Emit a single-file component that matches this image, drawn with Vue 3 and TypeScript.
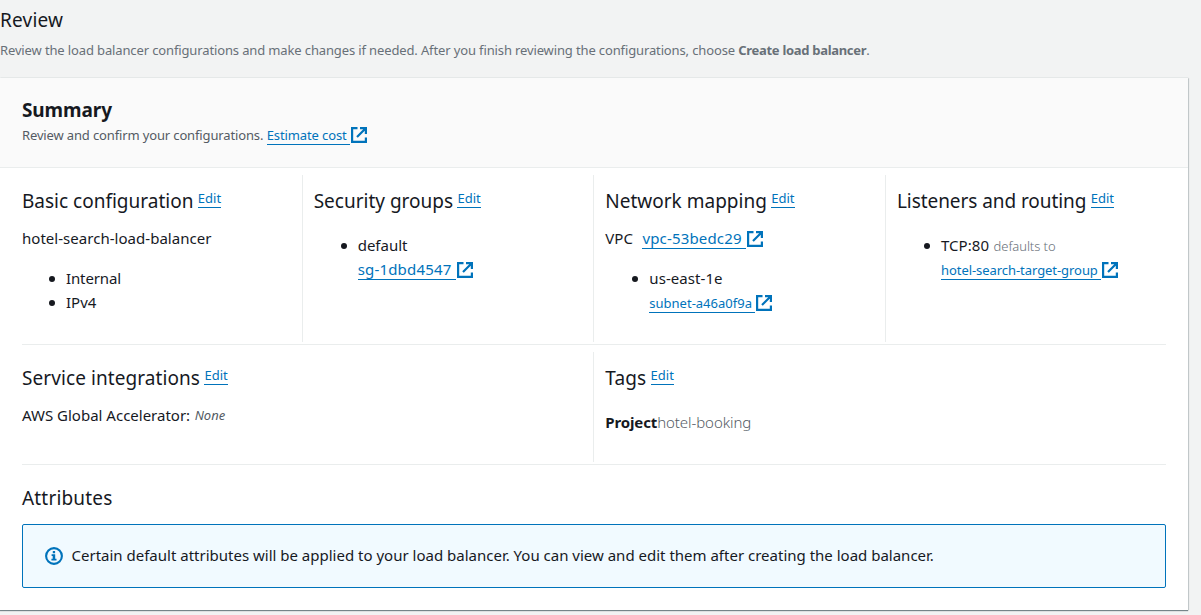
<script setup lang="ts">
import { h, type FunctionalComponent } from 'vue'

const ExternalIcon: FunctionalComponent = () =>
  h('svg', { viewBox: '0 0 16 16', width: 16, height: 16, class: 'ext', 'aria-hidden': 'true' }, [
    h('path', { d: 'M6.5 1.1H1.1v13.8h13.8v-4.4M9 1.1h5.9V7M14.5 1.5 6 10', fill: 'none', stroke: '#0073bb', 'stroke-width': 2.2 }),
  ])
</script>

<template>
  <main class="page">
    <h1 class="title">Review</h1>
    <p class="intro">Review the load balancer configurations and make changes if needed. After you finish reviewing the configurations, choose <b>Create load balancer</b>.</p>
    <section class="panel">
      <header class="head">
        <h2 class="summary">Summary</h2>
        <p class="sub"><span class="confirm">Review and confirm your configurations.</span><a class="link small estimate">Estimate cost</a><ExternalIcon /></p>
      </header>
      <div class="row first">
        <article class="cell">
          <h3><span class="t-basic">Basic configuration</span><a class="edit">Edit</a></h3>
          <p class="line"><span class="lb-name">hotel-search-load-balancer</span></p>
          <ul class="after-line">
            <li><span class="internal">Internal</span></li>
            <li><span>IPv4</span></li>
          </ul>
        </article>
        <article class="cell">
          <h3><span class="t-security">Security groups</span><a class="edit">Edit</a></h3>
          <ul>
            <li><span>default</span><div class="ref"><a class="link sg">sg-1dbd4547</a><ExternalIcon /></div></li>
          </ul>
        </article>
        <article class="cell">
          <h3><span class="t-network">Network mapping</span><a class="edit">Edit</a></h3>
          <p class="line"><span class="vpc-label">VPC</span><a class="link vpc">vpc-53bedc29</a><ExternalIcon /></p>
          <ul class="after-line">
            <li><span class="zone">us-east-1e</span><div class="ref"><a class="link small subnet">subnet-a46a0f9a</a><ExternalIcon /></div></li>
          </ul>
        </article>
        <article class="cell">
          <h3><span class="t-listeners">Listeners and routing</span><a class="edit">Edit</a></h3>
          <ul>
            <li><span class="tcp">TCP:80</span><span class="defaults">defaults to</span><div class="ref raised"><a class="link small target">hotel-search-target-group</a><ExternalIcon /></div></li>
          </ul>
        </article>
      </div>
      <div class="row second">
        <article class="cell">
          <h3><span class="t-service">Service integrations</span><a class="edit">Edit</a></h3>
          <p class="line"><span>AWS Global Accelerator:</span><i class="none">None</i></p>
        </article>
        <article class="cell">
          <h3><span class="t-tags">Tags</span><a class="edit">Edit</a></h3>
          <p class="line tag"><b class="project">Project</b><span class="booking">hotel-booking</span></p>
        </article>
      </div>
      <div class="attributes">
        <h3><span class="t-attr">Attributes</span></h3>
        <div class="alert">
          <svg class="info" viewBox="0 0 18 18" width="18" height="18" aria-hidden="true">
            <circle cx="9" cy="9" r="7.9" fill="none" stroke="#0073bb" stroke-width="2.1" />
            <path d="M7.8 4h2.3v2.2H7.8zM6.6 7.2h3.6v4.6h1.3v1.8H6.4v-1.8h1.3V9H6.6z" fill="#0073bb" />
          </svg>
          <span class="notice">Certain default attributes will be applied to your load balancer. You can view and edit them after creating the load balancer.</span>
        </div>
      </div>
    </section>
  </main>
</template>

<style>
body { margin: 0; background: #f2f3f3; }
</style>

<style scoped>
.page { box-sizing: border-box; height: 615px; overflow: hidden; background: #f2f3f3; color: #16191f; font: 15px/24px "Noto Sans", sans-serif; white-space: nowrap; }
h1, h2, h3, p, ul { margin: 0; padding: 0; font-weight: 400; }
.title { padding-top: 8px; font-size: 19px; line-height: 24px; letter-spacing: .2px; }
.intro { padding-top: 8px; font-size: 13px; line-height: 20px; color: #687078; height: 22px; letter-spacing: -.13px; }
.intro b { letter-spacing: -.3px; }
.panel { width: 1188px; height: 532px; margin-top: 16px; background: #fff; box-shadow: 0 1px 1px rgba(0, 28, 36, .5), 1px 0 1px rgba(0, 28, 36, .12), 0 -1px 0 #eaeded; }
.head { box-sizing: border-box; height: 90px; padding: 20px 22px 0; background: #fafafa; border-bottom: 1px solid #eaeded; }
.summary { font-size: 19px; font-weight: 700; line-height: 24px; letter-spacing: -.1px; }
.sub { display: flex; align-items: center; height: 26px; font-size: 13px; color: #545b64; }
.confirm { letter-spacing: -.14px; }
.link { box-sizing: border-box; height: 20px; line-height: 19px; color: #0073bb; border-bottom: 1px solid #0073bb; padding-right: 3px; }
:deep(.ext), .ext { display: block; flex: none; margin-left: 1px; }
.row { display: grid; margin: 0 11px; width: 1166.67px; padding-top: 7px; }
.row::after { content: ""; display: block; height: 1px; margin: 2px 11.67px 0 11px; background: #eaeded; grid-column: 1 / -1; }
.first { grid-template-columns: repeat(4, 1fr); grid-template-rows: 167px 3px; }
.second { grid-template-columns: repeat(2, 1fr); grid-template-rows: 110px 3px; }
.cell { padding: 14px 0 0 11px; }
.cell + .cell { margin-left: -1px; border-left: 1px solid #eaeded; padding-left: 11px; }
h3 { display: flex; font-size: 19px; line-height: 24px; height: 24px; }
.edit { box-sizing: border-box; height: 17px; margin: 2px 0 0 4.4px; font-size: 13px; line-height: 14px; color: #0073bb; border-bottom: 1px solid #0073bb; }
.line { display: flex; align-items: center; height: 24px; margin-top: 14px; }
.line > span, .line > i, .line > b { align-self: flex-start; line-height: 22px; }
ul { margin-top: 21px; padding-left: 44px; list-style: none; }
ul.after-line { margin-top: 16px; }
li { position: relative; height: 24px; line-height: 22px; }
li::before { content: ""; position: absolute; left: -17px; top: 9px; width: 6px; height: 6px; border-radius: 50%; background: #16191f; }
.ref { display: flex; align-items: center; height: 24px; margin-top: 2px; }
.raised { margin-top: 1px; }
.small { height: 19px; font-size: 13px; line-height: 18px; }
.t-listeners { letter-spacing: -.07px; }
.t-service { letter-spacing: .08px; }
.t-tags { letter-spacing: .1px; }
.t-attr { letter-spacing: .18px; }
.lb-name { letter-spacing: .03px; }
.internal { letter-spacing: -.12px; }
.sg { letter-spacing: .18px; padding-right: 4.5px; }
.vpc-label { margin-right: 9.5px; }
.vpc { letter-spacing: .17px; padding-right: 4px; }
.zone { letter-spacing: .06px; }
.target { letter-spacing: -.06px; }
.tcp { letter-spacing: .05px; }
.defaults { margin-left: 4.5px; font-size: 13px; letter-spacing: -.07px; color: #687078; font-weight: 300; }
.none { margin-left: 4.5px; font-size: 13px; color: #545b64; }
.tag { margin-top: 21px; }
.project { letter-spacing: -.14px; }
.booking { color: #545b64; font-weight: 300; letter-spacing: -.07px; }
.attributes { padding: 21px 22px 0; }
.alert { box-sizing: border-box; display: flex; align-items: center; height: 64px; margin-top: 14px; padding-left: 22px; border: 1px solid #0073bb; border-radius: 2px; background: #f1faff; }
.info { margin-right: 8.5px; }
.notice { margin-bottom: 2px; }
.estimate { margin-left: 3.4px; padding-right: 3.5px; letter-spacing: -.1px; }
</style>
